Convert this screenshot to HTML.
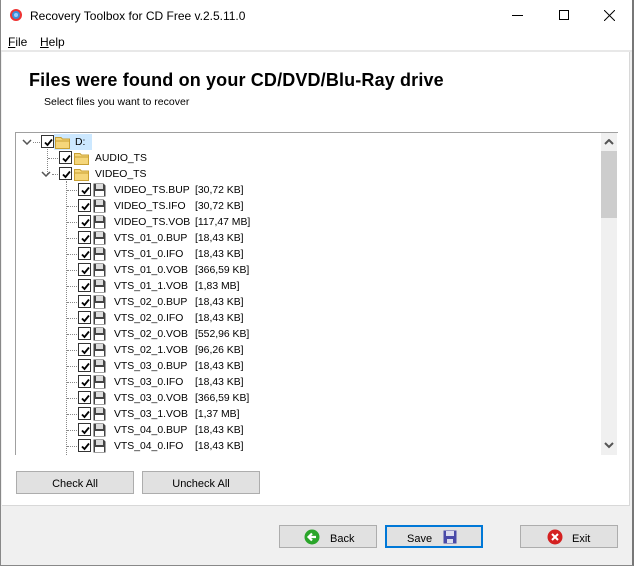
<!DOCTYPE html>
<html><head><style>
*{margin:0;padding:0;box-sizing:border-box}
body{width:634px;height:566px;background:#f0f0f0;font-family:"Liberation Sans",sans-serif;font-size:11px;color:#000;position:relative;overflow:hidden}
.a{position:absolute}
.win{left:0;top:0;width:634px;height:566px;border-left:1px solid #888;border-right:2px solid #777;border-bottom:1px solid #888}
.cb{position:absolute;width:13px;height:13px;border:1px solid #333;background:#fff}
.cb svg{position:absolute;left:1px;top:1px}
.row{position:absolute;height:16px;line-height:17px;white-space:nowrap;color:#000;font-size:10.4px}
.btn{position:absolute;height:23px;background:#e1e1e1;border:1px solid #adadad;text-align:center;line-height:24px;font-size:11px}
.dh{position:absolute;border-top:1px dotted #888;height:0}
.dv{position:absolute;border-left:1px dotted #888;width:0}
</style></head><body>
<div class="a win"></div>
<div class="a" style="left:1px;top:0;width:631px;height:31px;background:#fff"></div>
<svg class="a" style="left:9px;top:8px" width="14" height="14"><circle cx="7" cy="7" r="6" fill="#e33" /><circle cx="7" cy="7" r="4" fill="#3a8fd8"/><circle cx="7" cy="7" r="2" fill="#9cf"/></svg>
<div class="a" style="left:30px;top:9px;font-size:12px">Recovery Toolbox for CD Free v.2.5.11.0</div>
<div class="a" style="left:512px;top:15px;width:11px;border-top:1px solid #000"></div>
<div class="a" style="left:559px;top:10px;width:10px;height:10px;border:1px solid #000"></div>
<svg class="a" style="left:604px;top:10px" width="11" height="11"><path d="M0 0L11 11M11 0L0 11" stroke="#000"/></svg>
<div class="a" style="left:1px;top:31px;width:631px;height:19px;background:#fff"></div>
<div class="a" style="left:8px;top:35px;font-size:12px"><u>F</u>ile</div>
<div class="a" style="left:40px;top:35px;font-size:12px"><u>H</u>elp</div>
<div class="a" style="left:1px;top:50px;width:631px;height:2px;background:#e8e8e8"></div>
<div class="a" style="left:2px;top:52px;width:628px;height:454px;background:#fff;border-bottom:1px solid #d8d8d8;border-right:1px solid #d8d8d8"></div>
<div class="a" style="left:29px;top:70px;font-size:18px;font-weight:bold;letter-spacing:0.15px">Files were found on your CD/DVD/Blu-Ray drive</div>
<div class="a" style="left:44px;top:96px;font-size:10.5px">Select files you want to recover</div>
<div class="a" style="left:15px;top:132px;width:603px;height:323px;border-top:1px solid #a0a0a0;border-left:1px solid #a0a0a0"></div>
<div class="a" style="left:601px;top:133px;width:16px;height:322px;background:#f0f0f0"></div>
<div class="a" style="left:601px;top:151px;width:16px;height:67px;background:#cdcdcd"></div>
<svg class="a" style="left:604px;top:139px" width="10" height="7"><path d="M1 5L5 1L9 5" stroke="#555" stroke-width="2" fill="none"/></svg>
<svg class="a" style="left:604px;top:442px" width="10" height="7"><path d="M1 1L5 5L9 1" stroke="#555" stroke-width="2" fill="none"/></svg>
<div id="tree"></div>
<div class="btn" style="left:16px;top:471px;width:118px">Check All</div>
<div class="btn" style="left:142px;top:471px;width:118px">Uncheck All</div>
<div class="btn" style="left:279px;top:525px;width:98px"><svg style="position:absolute;left:24px;top:3px" width="16" height="16"><circle cx="8" cy="8" r="7.5" fill="#2aa52a"/><path d="M12 8H5M8 4.5L4.5 8L8 11.5" stroke="#fff" stroke-width="2.2" fill="none"/></svg><span style="position:absolute;left:50px;top:1px">Back</span></div>
<div class="btn" style="left:385px;top:525px;width:98px;border:2px solid #0078d7;line-height:22px"><span style="position:absolute;left:20px;top:1px">Save</span><svg style="position:absolute;left:56px;top:3px" width="14" height="14"><rect x="0.5" y="0.5" width="13" height="13" fill="#4a4aa8"/><rect x="3" y="1" width="8" height="5" fill="#dde"/><rect x="4" y="9" width="6" height="4" fill="#dde"/></svg></div>
<div class="btn" style="left:520px;top:525px;width:98px"><svg style="position:absolute;left:26px;top:3px" width="16" height="16"><circle cx="8" cy="8" r="7.5" fill="#d42020"/><path d="M5 5L11 11M11 5L5 11" stroke="#fff" stroke-width="2"/></svg><span style="position:absolute;left:51px;top:1px">Exit</span></div>
<script>
var t=document.getElementById('tree'),h='';
function cb(x,y){return '<div class="cb" style="left:'+x+'px;top:'+y+'px"><svg width="11" height="11"><path d="M2 5.5L4.5 8L9 2.5" stroke="#000" stroke-width="1.8" fill="none"/></svg></div>';}
function fold(x,y){return '<svg class="a" style="left:'+x+'px;top:'+y+'px" width="16" height="14"><path d="M0.5 2.5H6L7.5 4H14.5V13.5H0.5Z" fill="#f5d67a" stroke="#c9a033"/><path d="M0.5 6H14.5" stroke="#c9a033"/></svg>';}
function fl(x,y){return '<svg class="a" style="left:'+x+'px;top:'+y+'px" width="13" height="14"><path d="M0.5 0.5H10.5L12.5 2.5V13.5H0.5Z" fill="#444"/><rect x="3" y="1" width="7" height="5" fill="#ddd"/><rect x="2" y="8" width="9" height="5" fill="#fff"/></svg>';}
function chev(x,y){return '<svg class="a" style="left:'+x+'px;top:'+y+'px" width="10" height="6"><path d="M1 1L5 5L9 1" stroke="#555" stroke-width="1.5" fill="none"/></svg>';}
h+='<div class="a" style="left:54px;top:134px;width:38px;height:16px;background:#cce8ff"></div>';
h+=chev(22,139)+'<div class="dh" style="left:33px;top:142px;width:7px"></div>'+cb(41,135)+fold(55,135)+'<div class="row" style="left:75px;top:134px">D:</div>';
h+='<div class="dv" style="left:47px;top:149px;height:25px"></div>';
h+='<div class="dh" style="left:48px;top:158px;width:10px"></div>'+cb(59,151)+fold(74,151)+'<div class="row" style="left:95px;top:150px">AUDIO_TS</div>';
h+=chev(41,171)+'<div class="dh" style="left:52px;top:174px;width:6px"></div>'+cb(59,167)+fold(74,167)+'<div class="row" style="left:95px;top:166px">VIDEO_TS</div>';
h+='<div class="dv" style="left:66px;top:181px;height:274px"></div>';
var f=[['VIDEO_TS.BUP','30,72 KB'],['VIDEO_TS.IFO','30,72 KB'],['VIDEO_TS.VOB','117,47 MB'],['VTS_01_0.BUP','18,43 KB'],['VTS_01_0.IFO','18,43 KB'],['VTS_01_0.VOB','366,59 KB'],['VTS_01_1.VOB','1,83 MB'],['VTS_02_0.BUP','18,43 KB'],['VTS_02_0.IFO','18,43 KB'],['VTS_02_0.VOB','552,96 KB'],['VTS_02_1.VOB','96,26 KB'],['VTS_03_0.BUP','18,43 KB'],['VTS_03_0.IFO','18,43 KB'],['VTS_03_0.VOB','366,59 KB'],['VTS_03_1.VOB','1,37 MB'],['VTS_04_0.BUP','18,43 KB'],['VTS_04_0.IFO','18,43 KB']];
for(var i=0;i<f.length;i++){var y=182+i*16;
h+='<div class="dh" style="left:67px;top:'+(y+8)+'px;width:10px"></div>'+cb(78,y+1)+fl(93,y+1)+'<div class="row" style="left:114px;top:'+y+'px">'+f[i][0]+'</div><div class="row" style="left:195px;top:'+y+'px">['+f[i][1]+']</div>';}
t.innerHTML=h;
</script>
</body></html>
